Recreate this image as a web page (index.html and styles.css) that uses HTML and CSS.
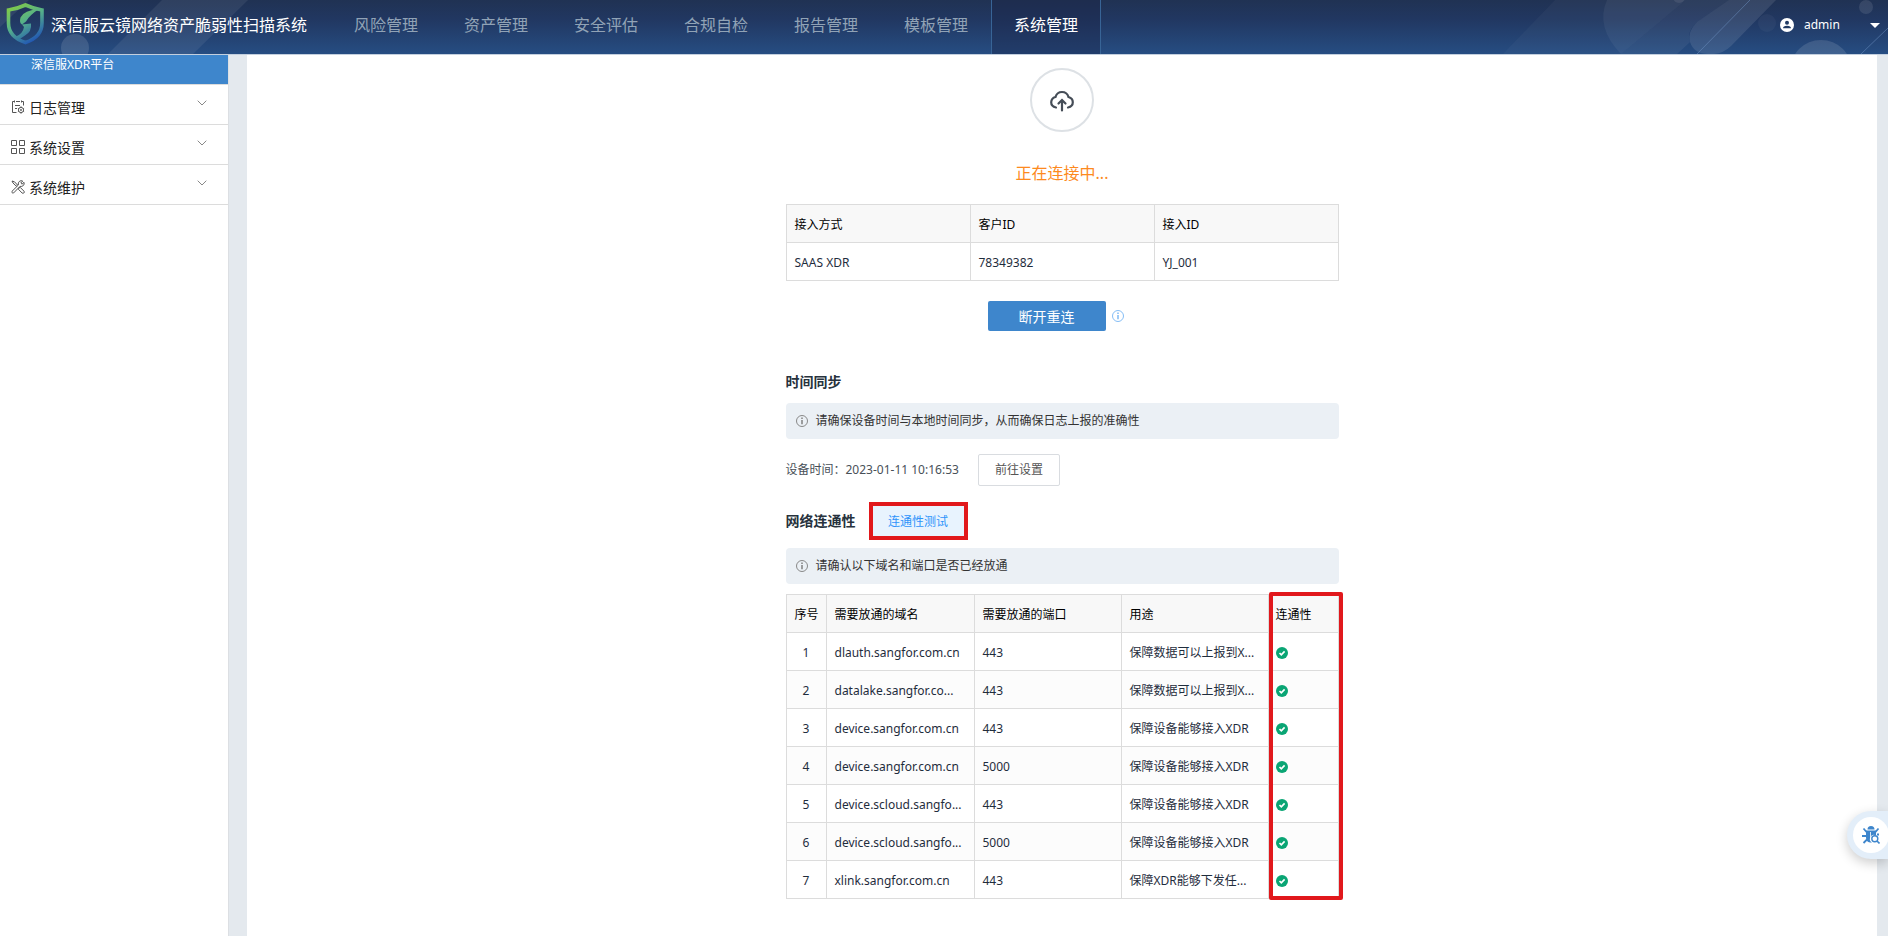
FILE: index.html
```html
<!DOCTYPE html>
<html lang="zh-CN">
<head>
<meta charset="utf-8">
<title>深信服云镜网络资产脆弱性扫描系统</title>
<link rel="stylesheet" href="styles.css">
</head>
<body>
<svg class="defs" width="0" height="0" aria-hidden="true">
  <symbol id="info" viewBox="0 0 12 12"><circle cx="6" cy="6" r="5.5" fill="none" stroke="currentColor"/><path d="M5.2 2.6h1.6v1.4H5.2zM5.2 4.9h1.6v4.3H5.2z" fill="currentColor"/></symbol>
  <symbol id="ok" viewBox="0 0 12 12"><circle cx="6" cy="6" r="6" fill="#0aa574"/><path d="M3.5 6l1.8 1.8 3.3-3.4" fill="none" stroke="#fff" stroke-width="1.7"/></symbol>
  <symbol id="down" viewBox="0 0 10 6"><path d="M.7.7L5 5 9.300.7" fill="none" stroke="currentColor"/></symbol>
</svg>
<header class="top">
  <svg class="deco deco-left" width="260" height="54" viewBox="0 0 260 54" aria-hidden="true">
    <g fill="#fff" fill-opacity=".07"><path d="M0 0h29L0 27zM162 0h86l-55 54h-85z"/><circle cx="75" cy="48" r="14" fill-opacity=".12"/></g>
  </svg>
  <svg class="deco deco-right" width="408" height="54" viewBox="0 0 408 54" aria-hidden="true">
    <g fill="#fff">
      <path d="M75 0H206L141 54H23z" fill-opacity=".03"/>
      <path d="M127 0h79l-65 54Q115 27 127 0z" fill-opacity=".05"/>
      <path d="M206 0h43l-32 22q-11 10-7 20l-13 12h-56z" fill-opacity=".06"/>
      <path d="M249 0l-32 22q-10 10-7 20 4 12 18 12h6q10-1 17-8L296 0z" fill-opacity=".1"/>
      <circle cx="199" cy="-3" r="6" fill-opacity=".08"/><circle cx="287" cy="23" r="9" fill-opacity=".04"/><circle cx="386" cy="7" r="7" fill-opacity=".1"/><circle cx="341" cy="71" r="31" fill-opacity=".12"/>
    </g>
    <path d="M270 0L217 54M408 28l-27 26" stroke="#6f94c4" stroke-opacity=".5"/>
  </svg>
  <div class="brand">
    <svg class="logo" width="38" height="42" viewBox="0 0 38 42" aria-hidden="true">
      <defs><linearGradient id="lg" gradientUnits="userSpaceOnUse" x1="8" y1="4" x2="28" y2="38"><stop offset="0" stop-color="#7cc84e"/><stop offset=".45" stop-color="#55b08a"/><stop offset="1" stop-color="#2257b4"/></linearGradient></defs>
      <path d="M19.500 2Q27 5.500 36 7V20Q36 34 19.500 39.500 2.500 34 2.500 20V7Q12 5.500 19.500 2z" fill="none" stroke="url(#lg)" stroke-width="3.600"/>
      <path d="M33 6Q18 7 14.500 14.500 13 20 16 21.500l4-3q3-6 13-12.500zM16 21.500L25 20.500q1 8-6 12l-6 4-3-3q7-3 8-9.500z" fill="url(#lg)"/>
    </svg>
    <span class="brand-name">深信服云镜网络资产脆弱性扫描系统</span>
  </div>
  <nav class="nav">
    <a href="#">风险管理</a><a href="#">资产管理</a><a href="#">安全评估</a><a href="#">合规自检</a><a href="#">报告管理</a><a href="#">模板管理</a><a href="#" class="active">系统管理</a>
  </nav>
  <button class="user" type="button">
    <svg width="14" height="14" viewBox="0 0 14 14" aria-hidden="true"><circle cx="7" cy="7" r="7" fill="#fff"/><circle cx="7" cy="4.800" r="2" fill="#213a63"/><path d="M3 10.300q0-2.600 4-2.600t4 2.600z" fill="#213a63"/></svg>
    <span class="user-name">admin</span>
    <svg width="10" height="5" viewBox="0 0 10 5" aria-hidden="true"><path d="M0 0h10L5 5z" fill="#fff"/></svg>
  </button>
</header>
<div class="page">
  <aside class="side">
    <a href="#" class="current">深信服XDR平台</a>
    <a href="#" class="group">
      <svg width="14" height="14" viewBox="0 0 14 14" fill="none" stroke="#555" aria-hidden="true"><path d="M5.500 12.500h-4v-11h1.800M5 1.500h4M10.500 1.500h2v4M3.500 .5v2M10.500 .5v2M4 5.500h5M4 8.500h2"/><circle cx="10" cy="10" r="2.600"/><circle cx="10" cy="10" r=".6"/><path d="M10 6.300v1M10 12.700v1M6.900 8.200l.8.500M12.300 11.300l.8.500M13.100 8.200l-.8.500M7.700 11.300l-.8.500"/></svg>
      <span>日志管理</span><svg class="arrow" width="10" height="6" aria-hidden="true"><use href="#down"/></svg>
    </a>
    <a href="#" class="group">
      <svg width="14" height="14" viewBox="0 0 14 14" fill="none" stroke="#555" aria-hidden="true"><path d="M.5 .5h5v5h-5zM8.500 .5h5v5h-5zM.5 8.500h5v5h-5zM8.500 8.500h5v5h-5z"/></svg>
      <span>系统设置</span><svg class="arrow" width="10" height="6" aria-hidden="true"><use href="#down"/></svg>
    </a>
    <a href="#" class="group">
      <svg width="14" height="14" viewBox="0 0 14 14" fill="none" stroke="#555" aria-hidden="true"><path d="M1 1l2.500 .8L6.500 5 5.300 6.200 2 3zM8 8l1-.8 4 4q.8 1-.2 1.800-.8.800-1.700 0L7.300 9.200zM1 11.300l6.300-6.200Q6.800 2.500 8.600 1.200 10 .3 11.700 1L9.800 3l1.200 1.200 2-1.900q.6 1.900-.6 3.200-1.400 1.300-3.500.9L2.700 12.900q-1 .4-1.600-.2-.5-.700-.1-1.400z"/></svg>
      <span>系统维护</span><svg class="arrow" width="10" height="6" aria-hidden="true"><use href="#down"/></svg>
    </a>
  </aside>
  <main class="main">
    <div class="panel">
      <div class="badge">
        <svg width="24" height="22" viewBox="0 0 24 22" fill="none" stroke="#454d57" stroke-width="2.200" stroke-linecap="round" aria-hidden="true"><path d="M6 17.500Q1.200 16.500 1.200 12.300 1.400 8 5.500 7 7 2 12 2t6.500 5Q22.800 8.200 22.800 12.300 22.800 16.500 18 17.500M12 20.500V10.500M8.500 13.500L12 10l3.500 3.500"/></svg>
      </div>
      <h1 class="status">正在连接中...</h1>
      <table class="grid access">
        <thead><tr><th>接入方式</th><th>客户ID</th><th>接入ID</th></tr></thead>
        <tbody><tr><td>SAAS XDR</td><td>78349382</td><td>YJ_001</td></tr></tbody>
      </table>
      <div class="actions">
        <button class="primary" type="button">断开重连</button>
        <svg class="hint" width="12" height="12" aria-hidden="true"><use href="#info"/></svg>
      </div>
      <h2 class="title">时间同步</h2>
      <p class="note"><svg width="12" height="12" aria-hidden="true"><use href="#info"/></svg>请确保设备时间与本地时间同步，从而确保日志上报的准确性</p>
      <div class="time"><span>设备时间：2023-01-11 10:16:53</span><button class="plain" type="button">前往设置</button></div>
      <div class="net"><h2 class="title">网络连通性</h2><button class="test" type="button">连通性测试</button></div>
      <p class="note"><svg width="12" height="12" aria-hidden="true"><use href="#info"/></svg>请确认以下域名和端口是否已经放通</p>
      <div class="marked">
        <table class="grid hosts">
          <colgroup><col class="c-no"><col class="c-host"><col class="c-port"><col class="c-use"><col class="c-link"></colgroup>
          <thead><tr><th>序号</th><th>需要放通的域名</th><th>需要放通的端口</th><th>用途</th><th>连通性</th></tr></thead>
          <tbody>
            <tr><td>1</td><td>dlauth.sangfor.com.cn</td><td>443</td><td>保障数据可以上报到X...</td><td><svg width="12" height="12" role="img" aria-label="ok"><use href="#ok"/></svg></td></tr>
            <tr><td>2</td><td>datalake.sangfor.co...</td><td>443</td><td>保障数据可以上报到X...</td><td><svg width="12" height="12" role="img" aria-label="ok"><use href="#ok"/></svg></td></tr>
            <tr><td>3</td><td>device.sangfor.com.cn</td><td>443</td><td>保障设备能够接入XDR</td><td><svg width="12" height="12" role="img" aria-label="ok"><use href="#ok"/></svg></td></tr>
            <tr><td>4</td><td>device.sangfor.com.cn</td><td>5000</td><td>保障设备能够接入XDR</td><td><svg width="12" height="12" role="img" aria-label="ok"><use href="#ok"/></svg></td></tr>
            <tr><td>5</td><td>device.scloud.sangfo...</td><td>443</td><td>保障设备能够接入XDR</td><td><svg width="12" height="12" role="img" aria-label="ok"><use href="#ok"/></svg></td></tr>
            <tr><td>6</td><td>device.scloud.sangfo...</td><td>5000</td><td>保障设备能够接入XDR</td><td><svg width="12" height="12" role="img" aria-label="ok"><use href="#ok"/></svg></td></tr>
            <tr><td>7</td><td>xlink.sangfor.com.cn</td><td>443</td><td>保障XDR能够下发任...</td><td><svg width="12" height="12" role="img" aria-label="ok"><use href="#ok"/></svg></td></tr>
          </tbody>
        </table>
      </div>
    </div>
  </main>
</div>
<button class="bug" type="button" aria-label="诊断">
  <span class="bug-disc"><svg width="18" height="18" viewBox="0 0 18 18" aria-hidden="true"><path d="M5.500 3.500a3.500 3.500 0 0 1 7 0zM4 4.500h10v5a4 4 0 0 0-4 7H8q-4-.5-4-5z" fill="#3e86cc"/><path d="M1.500 2.500L4.500 6M16.500 2.500L13.500 6M0 10h4M1.500 17l3.500-3.500M17 8.500h-2" stroke="#3e86cc" stroke-width="1.800"/><path d="M8.500 6v8" stroke="#fff" stroke-opacity=".8"/><circle cx="12.800" cy="12.800" r="3" fill="#fff" stroke="#3e86cc" stroke-width="1.400"/><path d="M15 15l2.500 2.500" stroke="#3e86cc" stroke-width="1.600"/></svg></span>
</button>
</body>
</html>
```
FILE: styles.css
```css
*, *::after { box-sizing: border-box; }
body {
  margin: 0;
  min-height: 100vh;
  display: flex;
  flex-direction: column;
  font: 12px/20px "Noto Sans", "Noto Sans CJK SC", sans-serif;
  color: #1f2d3d;
  background: #e4e9ee;
}
a { color: inherit; text-decoration: none; }
button { font: inherit; margin: 0; padding: 0; border: 0; background: none; cursor: pointer; }
svg { display: block; flex: none; }
.defs { position: absolute; }
h1, h2, p { margin: 0; }

.top {
  position: relative;
  display: flex;
  height: 55px;
  border-bottom: 1px solid #c3cfde;
  background: linear-gradient(#203253, #213761 35%, #264d82);
  color: #fff;
}
.deco { position: absolute; top: 0; }
.deco-left { left: 0; }
.deco-right { right: 0; }
.brand { position: relative; display: flex; gap: 7px; width: 331px; padding: 3px 0 0 6px; }
.brand-name { font-size: 16px; line-height: 44px; }
.nav { position: relative; display: flex; }
.nav a { width: 110px; text-align: center; font-size: 16px; line-height: 50px; color: #91a3b6; }
.nav .active { color: #fff; background: rgba(27, 38, 72, .4); border: solid #386496; border-width: 0 1px; }
.user { position: relative; display: flex; align-items: center; gap: 10px; height: 50px; margin-left: auto; padding-right: 8px; color: #fff; }
.user-name { width: 56px; text-align: left; }

.page { flex: 1; display: flex; }
.side { width: 229px; border-right: 1px solid #dcdfe3; background: #fff; color: #222; }
.current { display: block; padding: 0 31px 9px; background: #3e86cc; color: #fff; border-bottom: 1px solid #dcdcdc; }
.group { display: flex; align-items: center; gap: 4px; height: 40px; padding: 6px 21px 0 11px; border-bottom: 1px solid #dcdcdc; font-size: 14px; }
.group svg:first-child { margin-bottom: 2px; }
.arrow { margin: 0 0 10px auto; color: #888; }
.main { flex: 1; padding: 0 11px 0 18px; }
.panel { display: flex; flex-direction: column; align-items: center; min-height: 100%; padding: 13px 20px 36px; background: #fff; }
.badge { display: grid; place-items: center; width: 64px; height: 64px; padding-top: 2px; border: 2px solid #dde1e5; border-radius: 50%; }
.status { margin: 29px 0 19px; font-size: 16px; line-height: 24px; font-weight: 400; color: #fd8a1e; }

.grid { width: 553px; border-collapse: collapse; table-layout: fixed; }
.grid th, .grid td { height: 38px; padding: 2px 8px 0; border: 1px solid #dcdcdc; text-align: left; font-weight: 400; white-space: nowrap; }
.grid th { background: #f8f8f8; color: #000; }
.hosts tbody tr:nth-child(even) { background: #fcfcfc; }
.hosts td:first-child, .hosts th:first-child { text-align: center; }
.grid.hosts td:last-child, .grid.hosts th:last-child { padding-left: 7px; }
.c-no { width: 40px; }
.c-host { width: 148px; }
.c-port, .c-use { width: 147px; }

.actions { display: flex; align-items: center; gap: 6px; width: 553px; margin: 20px 0 40px; padding-left: 202px; }
.primary { width: 118px; height: 30px; padding-top: 2px; border-radius: 2px; background: #3e86cc; color: #fff; font-size: 14px; }
.hint { color: #85bdf5; }
.title { font-size: 14px; line-height: 22px; font-weight: 700; color: #27323d; }
.panel > .title { width: 553px; }
.note { display: flex; align-items: center; gap: 8px; width: 553px; height: 36px; padding: 0 10px; border-radius: 4px; background: #ebf0f5; color: #333; }
.title + .note { margin-top: 10px; }
.note svg { color: #888; }
.time { display: flex; align-items: center; gap: 19px; width: 553px; margin: 15px 0 16px; color: #485058; }
.plain { width: 82px; height: 32px; border: 1px solid #d9dce0; border-radius: 2px; background: #fff; color: #555; }
.net { display: flex; align-items: center; gap: 17px; width: 553px; height: 38px; margin-bottom: 8px; }
.test { width: 91px; height: 30px; padding-top: 2px; background: #e8f3fe; color: #2f93fb; outline: 4px solid #e1181c; }
.marked { position: relative; margin-top: 10px; }
.marked::after { content: ""; position: absolute; top: -2px; right: -4px; bottom: -1px; width: 74px; border: 4px solid #e1181c; border-radius: 2px; }

.bug { position: fixed; right: 0; top: 811px; width: 41px; height: 48px; padding: 6px 0 6px 6px; border-radius: 24px 0 0 24px; background: #e3eef9; box-shadow: 0 4px 12px rgba(0, 0, 0, .2); }
.bug-disc { display: grid; place-items: center; width: 36px; height: 36px; border-radius: 50%; background: #fff; }
```
